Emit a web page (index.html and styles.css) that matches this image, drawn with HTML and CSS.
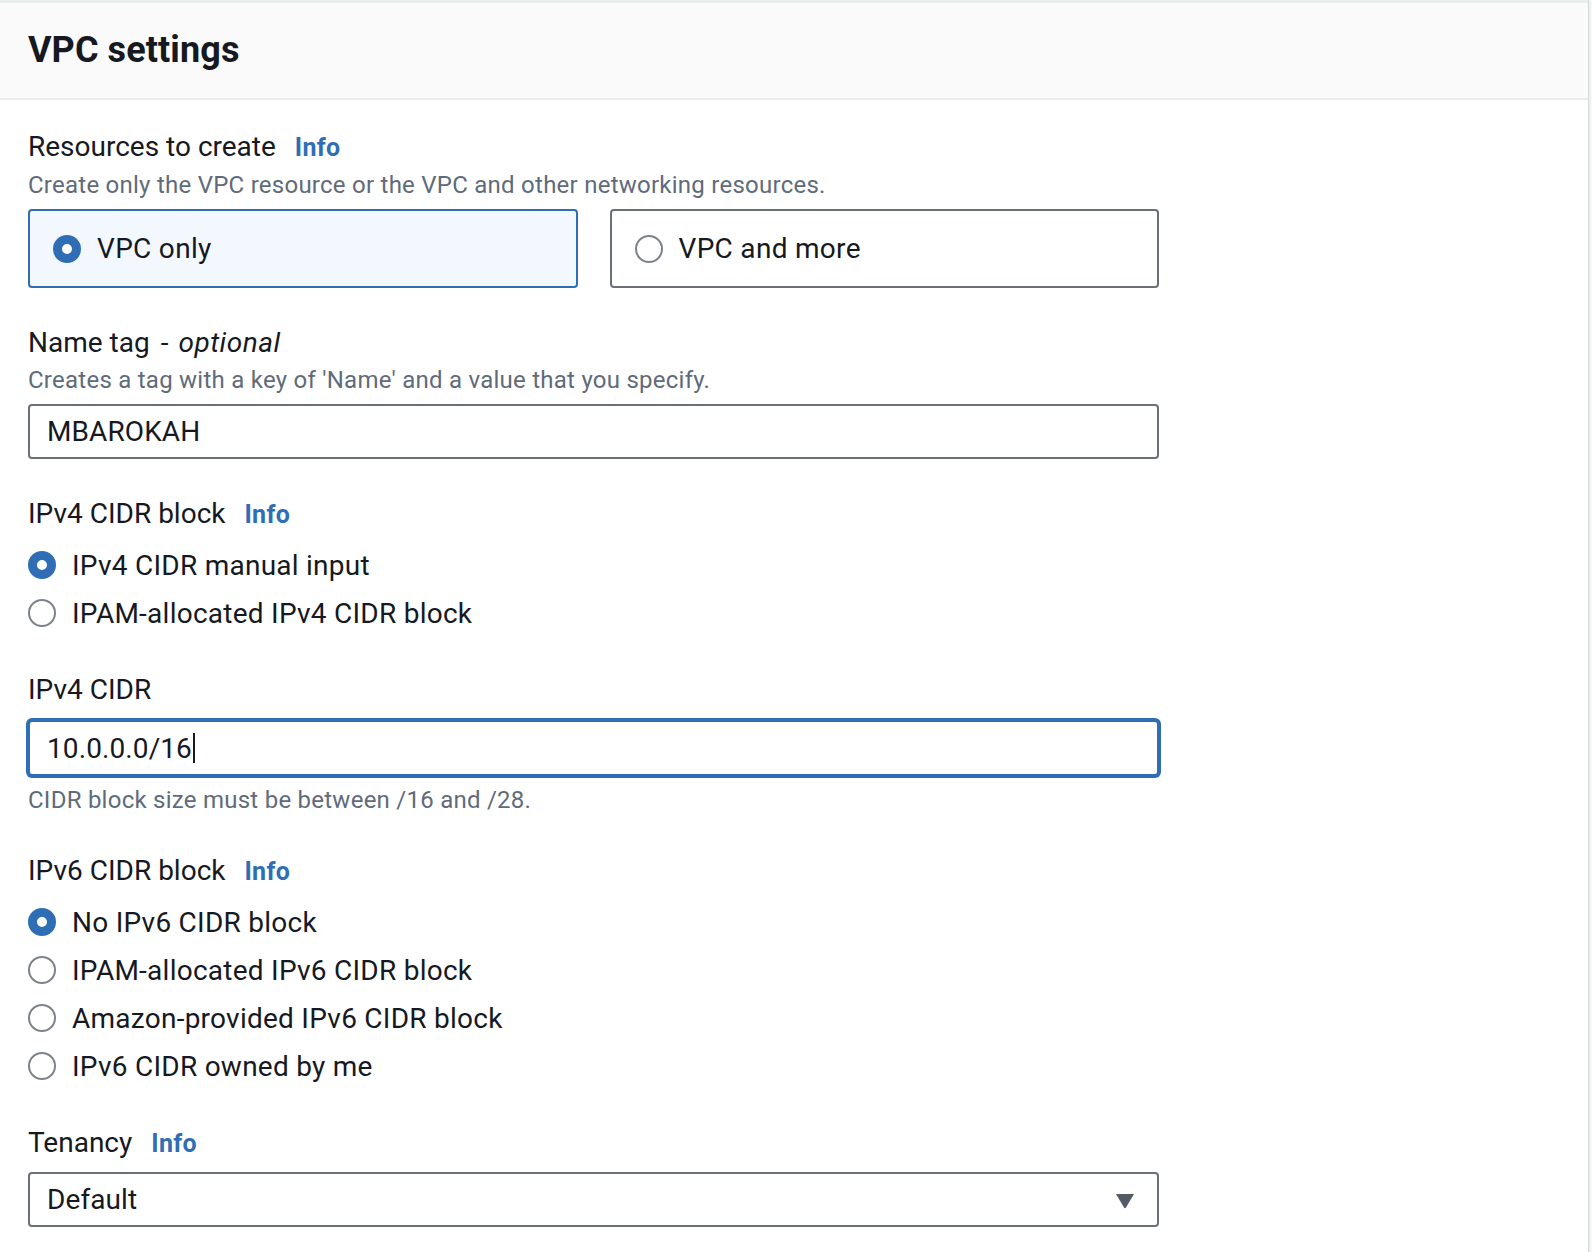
FILE: index.html
```html
<!DOCTYPE html>
<html lang="en">
<head>
<meta charset="utf-8">
<title>VPC settings</title>
<link rel="stylesheet" href="styles.css">
</head>
<body>
<div class="card">
  <div class="card-header">
    <h2 class="card-title">VPC settings</h2>
  </div>
  <div class="card-body">

    <div class="field">
      <div class="label">Resources to create <a class="info" href="#">Info</a></div>
      <div class="desc">Create only the VPC resource or the VPC and other networking resources.</div>
      <div class="tiles">
        <div class="tile selected">
          <span class="radio checked"></span>
          <span class="tile-text">VPC only</span>
        </div>
        <div class="tile">
          <span class="radio"></span>
          <span class="tile-text">VPC and more</span>
        </div>
      </div>
    </div>

    <div class="field">
      <div class="label">Name tag<span class="dash">-</span><em>optional</em></div>
      <div class="desc">Creates a tag with a key of 'Name' and a value that you specify.</div>
      <div class="input">MBAROKAH</div>
    </div>

    <div class="field radios">
      <div class="label">IPv4 CIDR block <a class="info" href="#">Info</a></div>
      <div class="radio-group">
        <div class="radio-row"><span class="radio checked"></span><span>IPv4 CIDR manual input</span></div>
        <div class="radio-row"><span class="radio"></span><span>IPAM-allocated IPv4 CIDR block</span></div>
      </div>
    </div>

    <div class="field">
      <div class="label">IPv4 CIDR</div>
      <div class="input focused"><span>10.0.0.0/16</span><span class="caret"></span></div>
      <div class="hint">CIDR block size must be between /16 and /28.</div>
    </div>

    <div class="field radios">
      <div class="label">IPv6 CIDR block <a class="info" href="#">Info</a></div>
      <div class="radio-group">
        <div class="radio-row"><span class="radio checked"></span><span>No IPv6 CIDR block</span></div>
        <div class="radio-row"><span class="radio"></span><span>IPAM-allocated IPv6 CIDR block</span></div>
        <div class="radio-row"><span class="radio"></span><span>Amazon-provided IPv6 CIDR block</span></div>
        <div class="radio-row"><span class="radio"></span><span>IPv6 CIDR owned by me</span></div>
      </div>
    </div>

    <div class="field">
      <div class="label">Tenancy <a class="info" href="#">Info</a></div>
      <div class="input select">
        <span>Default</span>
        <svg class="caret-down" width="20" height="16" viewBox="0 0 20 16"><path d="M1 1 H19 L11 14.5 Q10 16 9 14.5 Z" fill="#545b64"/></svg>
      </div>
    </div>

  </div>
</div>
</body>
</html>
```

FILE: styles.css
```css
html, body {
  margin: 0;
  padding: 0;
  background: #ffffff;
}

body {
  font-family: Roboto, "Liberation Sans", Arial, sans-serif;
  color: #16191f;
}

.card {
  width: 1588px;
  min-height: 1252px;
  border-top: 3px solid #eaeded;
  box-shadow: 1px 0 0 #d5dbdb, 3px 0 2px rgba(0, 0, 0, 0.08);
  background: #fff;
}

.card-header {
  height: 95px;
  background: #fafafa;
  border-bottom: 2px solid #eaeded;
  padding-left: 28px;
  display: flex;
  align-items: center;
}

.card-title {
  margin: 0;
  font-size: 36px;
  font-weight: 700;
  line-height: 48px;
  color: #16191f;
  padding-bottom: 2px;
  letter-spacing: 0.1px;
}

.card-body {
  padding: 29px 28px 0 28px;
  width: 1131px;
}

.field {
  margin-bottom: 37px;
}

.field.radios {
  margin-bottom: 35px;
}

.label {
  font-size: 28px;
  line-height: 36px;
  letter-spacing: 0;
  color: #16191f;
  display: flex;
  align-items: baseline;
}

.label .dash {
  margin: 0 10px 0 11px;
}

.label em {
  font-style: italic;
  letter-spacing: 0.5px;
}

.info {
  font-size: 25px;
  font-weight: 700;
  letter-spacing: 0.3px;
  color: #2f6eb5;
  text-decoration: none;
  margin-left: 19px;
}

.desc {
  font-size: 24px;
  line-height: 32px;
  letter-spacing: 0.25px;
  color: #5f6b7a;
  margin-top: 3px;
  margin-bottom: 8px;
}

.hint {
  font-size: 24px;
  line-height: 32px;
  letter-spacing: 0.25px;
  color: #5f6b7a;
  margin-top: 8px;
}

.tiles {
  display: flex;
  gap: 32px;
}

.tile {
  flex: 1;
  height: 79px;
  box-sizing: border-box;
  border: 2px solid #6b7078;
  border-radius: 4px;
  display: flex;
  align-items: center;
  padding-left: 23px;
  gap: 16px;
  font-size: 28px;
  letter-spacing: 0.3px;
  background: #fff;
}

.tile.selected {
  border-color: #2f6eb5;
  background: #f2f8fd;
}

.radio {
  width: 28px;
  height: 28px;
  box-sizing: border-box;
  border-radius: 50%;
  border: 2px solid #7d838b;
  background: #fff;
  flex: none;
}

.radio.checked {
  border: 9px solid #2f6eb5;
  background: #fff;
}

.radio-group {
  margin-top: 8px;
  display: flex;
  flex-direction: column;
}

.radio-row {
  height: 48px;
  display: flex;
  align-items: center;
  gap: 16px;
  font-size: 28px;
  letter-spacing: 0.25px;
}

.input {
  height: 55px;
  box-sizing: border-box;
  border: 2px solid #6b7078;
  border-radius: 4px;
  padding-left: 17px;
  padding-right: 22px;
  display: flex;
  align-items: center;
  font-size: 28px;
  letter-spacing: 0.1px;
  color: #16191f;
  background: #fff;
}

.field .label + .input {
  margin-top: 10px;
}

.field .label + .input.focused {
  margin-top: 12px;
}

.input.focused {
  height: 56px;
  border-color: #2f6eb5;
  box-shadow: 0 0 0 2px #2f6eb5;
}

.caret {
  display: inline-block;
  width: 2px;
  height: 30px;
  background: #16191f;
  margin-left: 1px;
}

.select {
  justify-content: space-between;
}

.caret-down {
  display: block;
  margin-top: 2px;
}
```
